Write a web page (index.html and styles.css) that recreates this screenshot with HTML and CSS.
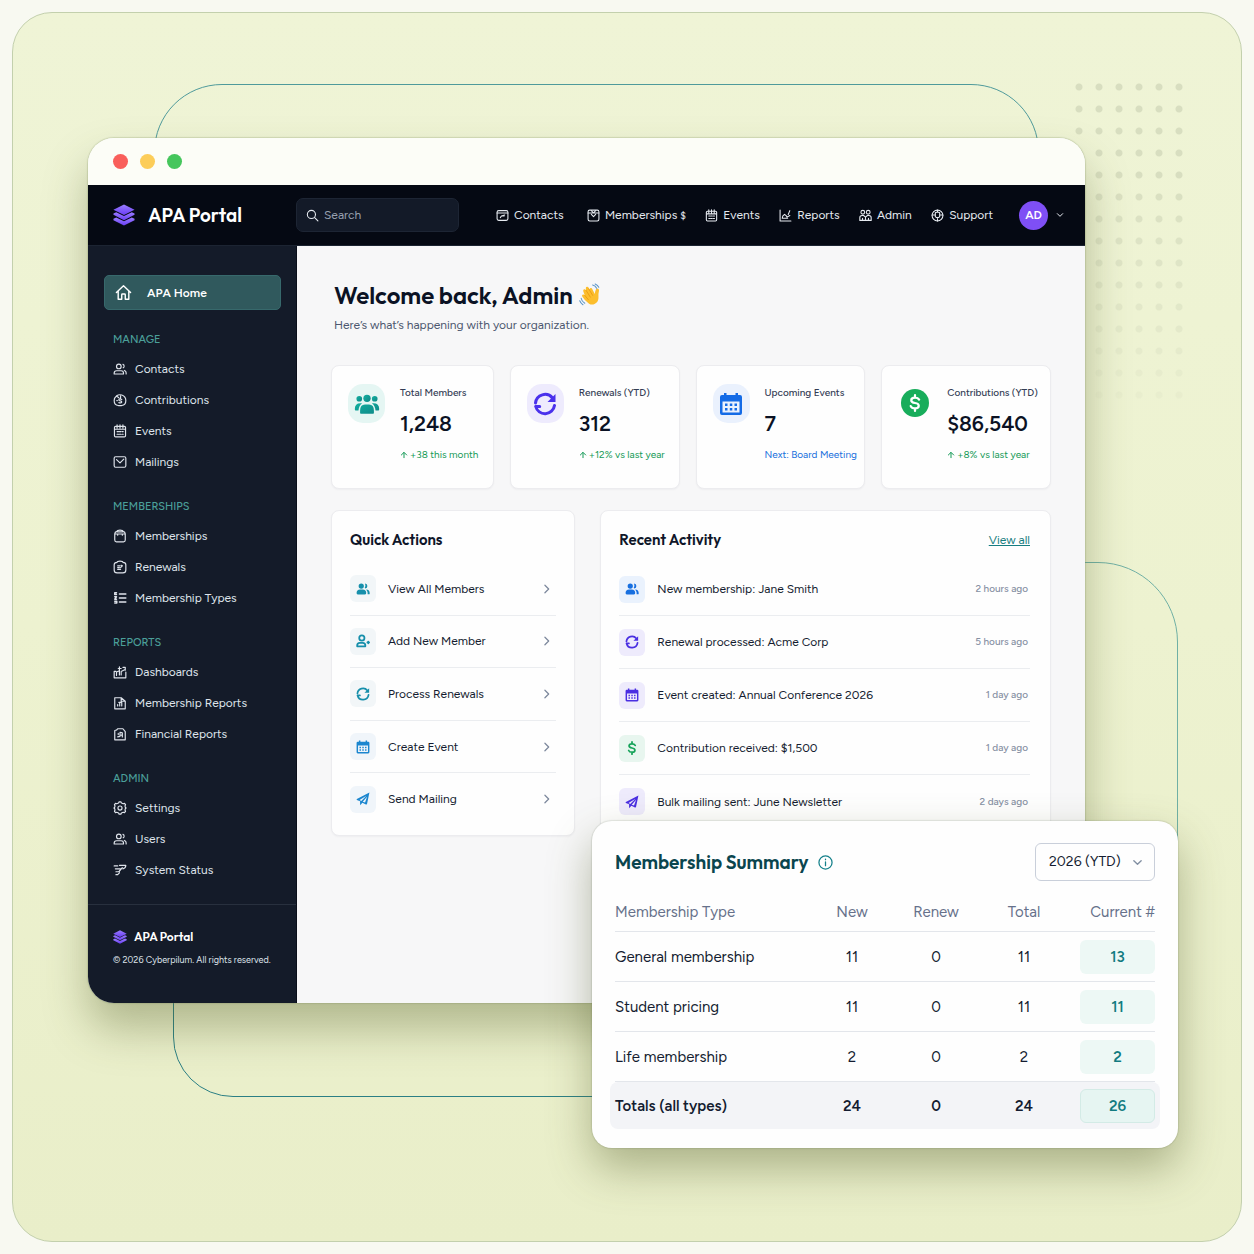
FILE: index.html
```html
<!DOCTYPE html>
<html lang="en">
<head>
    <meta charset="UTF-8">
    <meta name="viewport" content="width=device-width, initial-scale=1">
    <title>APA Portal</title>
    <link rel="stylesheet" href="styles.css">
</head>
<body>
<!-- icon set -->
<svg class="sprite" aria-hidden="true">
    <defs>
        <linearGradient id="violet" x1="0" y1="0" x2="0" y2="1"><stop offset="0" stop-color="#9a7dff"/><stop offset="1" stop-color="#6a3df5"/></linearGradient>
        <linearGradient id="teal" x1="0" y1="0" x2="1" y2="1"><stop offset="0" stop-color="#13b0a0"/><stop offset="1" stop-color="#0d8787"/></linearGradient>
    </defs>
    <symbol id="i-layers" viewBox="0 0 24 24"><g fill="url(#violet)"><path d="M12 .5 23.5 6.300 12 12 .5 6.300Z"/><path d="M.5 10.300 3.500 9 12 13.200 20.500 9l3 1.300v1.400L12 17.600.5 11.700Z"/><path d="M.5 16 3.500 14.700 12 18.900l8.500-4.200 3 1.300v1.600L12 23.500.5 17.600Z"/></g></symbol>
    <symbol id="i-search" viewBox="0 0 24 24"><circle cx="10" cy="10" r="7.500"/><path d="m16 16 6 6"/></symbol>
    <symbol id="i-home" viewBox="0 0 24 24"><path d="M2 12 12 2.500 22 12M4.500 10v11.500h5V15q0-1 1-1h3q1 0 1 1v6.500h5V10"/></symbol>
    <symbol id="i-people" viewBox="0 0 24 24"><circle cx="10" cy="7.500" r="4"/><path d="M2 20.500v-1.500q0-4 4-4h8q4 0 4 4v1.500ZM17 4q2.500 1 2 4-.5 1.500-1.500 2M19.500 14.500q3 1 3 4v2"/></symbol>
    <symbol id="i-coin" viewBox="0 0 24 24"><path d="M6 5Q2 8 2 13q0 8 7 8.500h6q7-.5 7-8.500 0-7-7-9.500-5-1.500-9 1.500l4 3M15 11q-4-2-5 .5 0 2 2.500 2t2.500 2q-1 2.500-5 1M13 5v4M6.500 13h1"/></symbol>
    <symbol id="i-cal" viewBox="0 0 24 24"><rect x="2.500" y="4" width="19" height="18" rx="2"/><path d="M3 9h18M7 1.500V7M12 1.500V7M17 1.500V7M7 13h2.500M11 13h2.500M15.500 13h2M7 17.500h2.500M11 17.500h2.500M15.500 17.500h2"/></symbol>
    <symbol id="i-mail" viewBox="0 0 24 24"><rect x="2" y="3" width="20" height="18" rx="2.500"/><path d="m6 8 6 5.500L18.500 7"/></symbol>
    <symbol id="i-case" viewBox="0 0 24 24"><path d="M3 8q0-3 4-4 0-2 5-2t5 2q4 1 4 4v11q0 3-3 3H6q-3 0-3-3ZM3 8.500h18M8 5h8M8 8.500v2M16 8.500v2"/></symbol>
    <symbol id="i-badge" viewBox="0 0 24 24"><path d="M7 4q0-2 5-2t5 2q5 0 5 4v9q0 5-5 5H7q-5 0-5-5V8q0-4 5-4ZM8 10h4M14 9l2 1-3 3M8 13h3M8 16h5"/></symbol>
    <symbol id="i-list" viewBox="0 0 24 24"><path d="M11 5h11M11 12h11M11 19h11M6 3H3v3h3M3 10h3l-3 4h3M3 17.500h3.500v3H3" stroke-width="2.500"/></symbol>
    <symbol id="i-dash" viewBox="0 0 24 24"><path d="M2 11v11h20V12M2 11h3M6 18v-6l5-2v7M11 3v9M9 6h5M14 17v-6l6-3M17 4h4v5"/></symbol>
    <symbol id="i-report" viewBox="0 0 24 24"><path d="M3 3h11l7 6v13H3ZM8 17v-2.500M11.500 17v-5M15 17v-6M14 3v6h7M10 11h5"/></symbol>
    <symbol id="i-finance" viewBox="0 0 24 24"><path d="M3 6q4 0 5-3h9l4 5v14H3ZM8 17l4-1V9l4 1v7M9 11v2M14 14h2"/></symbol>
    <symbol id="i-gear" viewBox="0 0 24 24"><path d="m9.500 3.500 1-2h3l1 2 3 1.200 2.200-.7 1.800 2.300-1 2.200.7 2.500 1.300 1-1.300 1-.7 2.500 1 2.200-1.800 2.300-2.200-.7-3 1.200-1 2h-3l-1-2-3-1.200-2.200.7-1.800-2.300 1-2.200L2.800 13l-1.300-1 1.300-1 .7-2.500-1-2.200L4.300 4l2.200.7Z"/><circle cx="12" cy="12" r="3.500"/></symbol>
    <symbol id="i-status" viewBox="0 0 24 24"><path d="M2 5h6M11 4h11q0 5-5 6M4 10h9M16 8l-6 7M5 15h6M5 20h3l3-3"/></symbol>
    <symbol id="i-box" viewBox="0 0 24 24"><rect x="2" y="3" width="20" height="18" rx="3"/><path d="M2 7.500h20M8 16l2-3 6-2M10 13h5"/></symbol>
    <symbol id="i-ticket" viewBox="0 0 24 24"><rect x="2" y="2" width="20" height="20" rx="3"/><path d="M2 7.500h20M8 3l4 4 4-4M8 10l4 4 4-4"/></symbol>
    <symbol id="i-chart" viewBox="0 0 24 24"><path d="M2 2v20h20M6 17q0-5 4-7l3 2 2 3 5-3M20 3l-3 7M7 17h9"/></symbol>
    <symbol id="i-admin" viewBox="0 0 24 24"><circle cx="7" cy="6" r="3.500"/><circle cx="17" cy="6" r="3.500"/><path d="M1.500 21v-5q0-4 4-4h3l3.500 3 3.500-3h3q4 0 4 4v5h-5v-4M6.500 17v4M12 15v6M2 21h9M13 21h5"/></symbol>
    <symbol id="i-support" viewBox="0 0 24 24"><circle cx="12" cy="12" r="10"/><path d="M2 11h6M16 11h6M8 7v7q4 4 8 0V7q-4-3-8 0ZM12 2v4M12 18v4"/></symbol>
    <symbol id="i-down" viewBox="0 0 24 24"><path d="m4 8 8 8 8-8"/></symbol>
    <symbol id="i-right" viewBox="0 0 24 24"><path d="m7 3 9 9-9 9"/></symbol>
    <symbol id="i-up" viewBox="0 0 24 24"><path d="M12 20V5M4 12l8-8 8 8"/></symbol>
    <symbol id="i-info" viewBox="0 0 24 24"><circle cx="12" cy="12" r="10.500"/><path d="M12 11v6M12 6.500v1"/></symbol>
    <symbol id="i-group" viewBox="0 0 32 28"><circle cx="16" cy="7" r="4.500"/><circle cx="6.500" cy="7.500" r="3.500"/><circle cx="25.500" cy="7.500" r="3.500"/><path d="M7.500 25v-3q0-7.500 6-7.500h5q6 0 6 7.500v3q0 1-1 1h-15q-1 0-1-1ZM1 20q0-7 7-7h2q-4 3-4.500 9H2q-1 0-1-2ZM31 20q0-7-7-7h-2q4 3 4.500 9H30q1 0 1-2Z"/></symbol>
    <symbol id="i-users" viewBox="0 0 24 24"><circle cx="9" cy="7" r="4.500"/><path d="M15.500 2.500q4 .5 4 4.500t-3.500 4q-1-.5-1-1 2-3.500.5-7.500ZM1 19q0-6 6-6h4.500q6 0 6 6 0 2.500-2 2.500H3q-2 0-2-2.500ZM17.500 13q6 0 6 6.500 0 1.500-1.500 1.500h-2q0-5-2.500-8Z"/></symbol>
    <symbol id="i-adduser" viewBox="0 0 24 24"><circle cx="10" cy="7" r="4.500"/><path d="M2 21v-1.500q0-4.500 4.500-4.500h5q4.500 0 4.500 4.500V21ZM21 13v3M19.500 14.500h3"/></symbol>
    <symbol id="i-sync" viewBox="0 0 24 24"><path d="M2.500 11A9.600 9.600 0 0 1 19.500 6M21.500 13.500A9.600 9.600 0 0 1 2.700 14.500h4"/><path d="M22.500 2v8h-8Z" fill="currentColor" stroke="none"/></symbol>
    <symbol id="i-calfill" viewBox="0 0 24 24"><path fill-rule="evenodd" d="M5 1h2.500v2h9V1H19v2h2q2 0 2 2v16q0 2-2 2H3q-2 0-2-2V5q0-2 2-2h2ZM3.500 9.500v11h17v-11Z"/><path d="M6 11.500h2.500V14H6ZM10.800 11.500h2.500V14h-2.500ZM15.500 11.500H18V14h-2.500ZM6 16h2.500v2.500H6ZM10.800 16h2.500v2.500h-2.500ZM15.500 16H18v2.500h-2.500Z"/></symbol>
    <symbol id="i-dollar" viewBox="0 0 24 24"><path d="M17.500 7.500Q16 4.800 12 4.800 7 4.800 7 8.300q0 3 5 3.700t5 3.700q0 3.500-5 3.500-4.500 0-5.700-3M12 1.500v3M12 19.500v3"/></symbol>
    <symbol id="i-plane" viewBox="0 0 24 24"><path fill-rule="evenodd" d="M23 1 1.500 12q-1 1 0 1.500L7 16v6.500l4-4 6 3q1.500 0 2-1.500ZM18 6.500 9 15.500l-3-2ZM19 8 15.500 18l-4-1.500Z"/></symbol>
    <symbol id="i-wave" viewBox="0 0 32 32">
        <path d="M14 28Q8 24 4.500 18q-1-2 .8-2.700 1.600-.5 2.800 1.300L6 11q-.7-2.300 1-3 1.800-.7 3 1.600L9.500 7q-.3-2.200 1.500-2.500 1.800-.2 2.700 2L15 8.500q-.3-2 1.300-2.300 1.600-.2 2.300 1.700l3.400 6.600q.4-4 1.500-6.200 1.200-1.900 3.200-1 1.800 1 1 3.500-1 3.500-.6 8.200.5 6.500-5.500 9.500-4 1.800-7.600-.5Z" fill="#fcbe2d"/>
        <path d="m8 16.500 5 6M9.800 9.500l6 9.500M13.500 7.500l5.500 9" fill="none" stroke="#e99a12" stroke-width="1.200" stroke-linecap="round"/>
        <path d="M3 20.500q.8 4.500 5 7M1 24q1.500 3.500 4.500 5.500M19 2q4 1 5.500 4.500M22.500.8q3.500 1.500 5 4.500" fill="none" stroke="#5c95c8" stroke-width="1.500" stroke-linecap="round"/>
    </symbol>
</svg>

<div class="stage">
    <div class="outline outline-top"></div>
    <div class="outline outline-right"></div>
    <div class="outline outline-bottom"></div>
    <div class="dots"></div>

    <div class="scene">
        <div class="window">
            <div class="titlebar">
                <span class="light red"></span>
                <span class="light yellow"></span>
                <span class="light green"></span>
            </div>

            <header class="topbar">
                <a class="brand" href="#"><svg><use href="#i-layers"/></svg>APA Portal</a>
                <label class="search">
                    <svg class="line"><use href="#i-search"/></svg>
                    <input type="search" placeholder="Search" aria-label="Search">
                </label>
                <nav class="topnav">
                    <a href="#"><svg class="line"><use href="#i-box"/></svg>Contacts</a>
                    <a href="#"><svg class="line"><use href="#i-ticket"/></svg><span>Memberships <small>$</small></span></a>
                    <a href="#"><svg class="line"><use href="#i-cal"/></svg>Events</a>
                    <a href="#"><svg class="line"><use href="#i-chart"/></svg>Reports</a>
                    <a href="#"><svg class="line"><use href="#i-admin"/></svg>Admin</a>
                    <a href="#"><svg class="line"><use href="#i-support"/></svg>Support</a>
                </nav>
                <button class="account" type="button"><span class="avatar">AD</span><svg class="line"><use href="#i-down"/></svg></button>
            </header>

            <div class="body">
                <aside class="sidebar">
                    <nav class="menu">
                        <a class="home" href="#"><svg class="line"><use href="#i-home"/></svg>APA Home</a>
                        <section>
                            <h2>MANAGE</h2>
                            <a href="#"><svg class="line"><use href="#i-people"/></svg>Contacts</a>
                            <a href="#"><svg class="line"><use href="#i-coin"/></svg>Contributions</a>
                            <a href="#"><svg class="line"><use href="#i-cal"/></svg>Events</a>
                            <a href="#"><svg class="line"><use href="#i-mail"/></svg>Mailings</a>
                        </section>
                        <section>
                            <h2>MEMBERSHIPS</h2>
                            <a href="#"><svg class="line"><use href="#i-case"/></svg>Memberships</a>
                            <a href="#"><svg class="line"><use href="#i-badge"/></svg>Renewals</a>
                            <a href="#"><svg class="line"><use href="#i-list"/></svg>Membership Types</a>
                        </section>
                        <section>
                            <h2>REPORTS</h2>
                            <a href="#"><svg class="line"><use href="#i-dash"/></svg>Dashboards</a>
                            <a href="#"><svg class="line"><use href="#i-report"/></svg>Membership Reports</a>
                            <a href="#"><svg class="line"><use href="#i-finance"/></svg>Financial Reports</a>
                        </section>
                        <section>
                            <h2>ADMIN</h2>
                            <a href="#"><svg class="line"><use href="#i-gear"/></svg>Settings</a>
                            <a href="#"><svg class="line"><use href="#i-people"/></svg>Users</a>
                            <a href="#"><svg class="line"><use href="#i-status"/></svg>System Status</a>
                        </section>
                    </nav>
                    <footer class="side-foot">
                        <div class="foot-brand"><svg><use href="#i-layers"/></svg>APA Portal</div>
                        <p>© 2026 Cyberpilum. All rights reserved.</p>
                    </footer>
                </aside>

                <main class="main">
                    <div class="welcome">
                        <h1>Welcome back, Admin <svg role="img" aria-label="waving hand"><use href="#i-wave"/></svg></h1>
                        <p>Here’s what’s happening with your organization.</p>
                    </div>

                    <div class="stats">
                        <div class="stat">
                            <span class="stat-icon teal"><svg class="fill"><use href="#i-group"/></svg></span>
                            <div class="stat-text">
                                <h3>Total Members</h3>
                                <strong>1,248</strong>
                                <p class="up"><svg class="line"><use href="#i-up"/></svg>+38 this month</p>
                            </div>
                        </div>
                        <div class="stat">
                            <span class="stat-icon purple"><svg class="line"><use href="#i-sync"/></svg></span>
                            <div class="stat-text">
                                <h3>Renewals (YTD)</h3>
                                <strong>312</strong>
                                <p class="up"><svg class="line"><use href="#i-up"/></svg>+12% vs last year</p>
                            </div>
                        </div>
                        <div class="stat">
                            <span class="stat-icon blue"><svg class="fill"><use href="#i-calfill"/></svg></span>
                            <div class="stat-text">
                                <h3>Upcoming Events</h3>
                                <strong>7</strong>
                                <p class="next">Next: Board Meeting</p>
                            </div>
                        </div>
                        <div class="stat">
                            <span class="stat-icon money"><svg class="line"><use href="#i-dollar"/></svg></span>
                            <div class="stat-text">
                                <h3>Contributions (YTD)</h3>
                                <strong>$86,540</strong>
                                <p class="up"><svg class="line"><use href="#i-up"/></svg>+8% vs last year</p>
                            </div>
                        </div>
                    </div>

                    <div class="panels">
                        <section class="panel quick">
                            <div class="panel-head"><h2>Quick Actions</h2></div>
                            <ul>
                                <li><a href="#"><span class="tile cyan"><svg class="fill"><use href="#i-users"/></svg></span>View All Members<svg class="line go"><use href="#i-right"/></svg></a></li>
                                <li><a href="#"><span class="tile cyan"><svg class="line"><use href="#i-adduser"/></svg></span>Add New Member<svg class="line go"><use href="#i-right"/></svg></a></li>
                                <li><a href="#"><span class="tile cyan"><svg class="line"><use href="#i-sync"/></svg></span>Process Renewals<svg class="line go"><use href="#i-right"/></svg></a></li>
                                <li><a href="#"><span class="tile sky"><svg class="fill"><use href="#i-calfill"/></svg></span>Create Event<svg class="line go"><use href="#i-right"/></svg></a></li>
                                <li><a href="#"><span class="tile sky"><svg class="fill"><use href="#i-plane"/></svg></span>Send Mailing<svg class="line go"><use href="#i-right"/></svg></a></li>
                            </ul>
                        </section>
                        <section class="panel recent">
                            <div class="panel-head"><h2>Recent Activity</h2><a href="#">View all</a></div>
                            <ul>
                                <li><span class="tile blue"><svg class="fill"><use href="#i-users"/></svg></span>New membership: Jane Smith<time>2 hours ago</time></li>
                                <li><span class="tile purple"><svg class="line"><use href="#i-sync"/></svg></span>Renewal processed: Acme Corp<time>5 hours ago</time></li>
                                <li><span class="tile purple"><svg class="fill"><use href="#i-calfill"/></svg></span>Event created: Annual Conference 2026<time>1 day ago</time></li>
                                <li><span class="tile green"><svg class="line"><use href="#i-dollar"/></svg></span>Contribution received: $1,500<time>1 day ago</time></li>
                                <li><span class="tile purple"><svg class="fill"><use href="#i-plane"/></svg></span>Bulk mailing sent: June Newsletter<time>2 days ago</time></li>
                            </ul>
                        </section>
                    </div>
                </main>
            </div>
        </div>

        <section class="summary">
            <div class="summary-head">
                <h2>Membership Summary</h2>
                <button class="info" type="button" aria-label="About this summary"><svg class="line"><use href="#i-info"/></svg></button>
                <div class="period">
                    <select aria-label="Period">
                        <option>2026 (YTD)</option>
                        <option>2025</option>
                    </select>
                    <svg class="line"><use href="#i-down"/></svg>
                </div>
            </div>
            <table>
                <thead>
                    <tr><th class="type">Membership Type</th><th>New</th><th>Renew</th><th class="total">Total</th><th class="current">Current #</th></tr>
                </thead>
                <tbody>
                    <tr><td>General membership</td><td>11</td><td>0</td><td>11</td><td><span class="pill">13</span></td></tr>
                    <tr><td>Student pricing</td><td>11</td><td>0</td><td>11</td><td><span class="pill">11</span></td></tr>
                    <tr><td>Life membership</td><td>2</td><td>0</td><td>2</td><td><span class="pill">2</span></td></tr>
                </tbody>
                <tfoot>
                    <tr><td>Totals (all types)</td><td>24</td><td>0</td><td>24</td><td><span class="pill">26</span></td></tr>
                </tfoot>
            </table>
        </section>
    </div>
</div>
</body>
</html>
```
FILE: styles.css
```css
* {
    box-sizing: border-box;
    margin: 0;
    padding: 0;
}

body {
    padding: 12px;
    background: #f8f9f1;
    color: #141c30;
    font: 12px/18px Figtree, Lato, "Liberation Sans", sans-serif;
}

h1,
h2,
.brand,
.foot-brand {
    font-family: Outfit, Figtree, Lato, "Liberation Sans", sans-serif;
}

a {
    color: inherit;
    text-decoration: none;
}

ul {
    list-style: none;
}

button,
input,
select {
    border: 0;
    background: none;
    color: inherit;
    font: inherit;
}

svg {
    display: block;
    flex: none;
}

.sprite {
    position: absolute;
    width: 0;
    height: 0;
}

.line {
    fill: none;
    stroke: currentColor;
    stroke-width: 2;
    stroke-linecap: round;
    stroke-linejoin: round;
}

.fill {
    fill: currentColor;
}

/* backdrop */
.stage {
    position: relative;
    min-height: calc(100vh - 24px);
    padding: 125px 156px 237px 75px;
    border: 1px solid #c3d0ad;
    border-radius: 40px;
    background: linear-gradient(180deg, #eff4d6 0%, #edf2d0 50%, #e9eec9 100%);
    overflow: hidden;
}

.outline {
    position: absolute;
    border: 1px solid #4f9a9b;
}

.outline-top {
    top: 71px;
    left: 141px;
    right: 202px;
    height: 300px;
    border-radius: 68px;
}

.outline-right {
    top: 549px;
    right: 63px;
    width: 300px;
    height: 400px;
    border-color: #70b0a5;
    border-radius: 80px;
}

.outline-bottom {
    left: 160px;
    right: 300px;
    bottom: 144px;
    height: 300px;
    border-color: #2b7f84;
    border-radius: 60px;
}

.dots {
    position: absolute;
    top: 63px;
    right: 52px;
    width: 120px;
    height: 330px;
    background: radial-gradient(circle, #d8dec0 3px, transparent 4px) 0 0 / 20px 22px;
    -webkit-mask-image: linear-gradient(190deg, #000 30%, transparent 110%);
    mask-image: linear-gradient(190deg, #000 30%, transparent 110%);
}

.scene {
    position: relative;
}

/* browser window */
.window {
    border-radius: 26px;
    background: #f7f7f8;
    box-shadow: 0 0 1px 1px rgba(120, 140, 90, .25), 0 26px 44px rgba(84, 94, 42, .38);
    overflow: hidden;
}

.titlebar {
    display: flex;
    align-items: center;
    gap: 12px;
    height: 47px;
    padding: 0 25px;
    background: #fcfdf7;
}

.light {
    width: 15px;
    height: 15px;
    border-radius: 50%;
}

.red {
    background: #f95f5b;
}

.yellow {
    background: #fccd59;
}

.green {
    background: #45c65c;
}

.topbar {
    display: flex;
    align-items: center;
    height: 61px;
    padding: 0 21px 0 25px;
    border-bottom: 1px solid #1c2432;
    background: #050913;
    color: #e6eaf0;
}

.brand {
    display: flex;
    align-items: center;
    gap: 13px;
    width: 183px;
    color: #fff;
    font-size: 19px;
    font-weight: 600;
}

.brand svg {
    width: 22px;
    height: 24px;
}

.search {
    display: flex;
    align-items: center;
    gap: 5px;
    width: 163px;
    height: 34px;
    padding: 0 9px;
    border: 1px solid #1d2534;
    border-radius: 7px;
    background: #131a28;
}

.search svg {
    width: 13px;
    height: 13px;
}

.search input {
    width: 100%;
    outline: 0;
}

.search input::placeholder {
    color: #98a1b0;
}

.topnav {
    display: flex;
    flex: 1;
    justify-content: space-between;
    margin: 0 26px 0 37px;
}

.topnav a {
    display: flex;
    align-items: center;
    gap: 5px;
}

.topnav a:first-child {
    margin-right: 4px;
}

.topnav svg {
    width: 13px;
    height: 13px;
}

.topnav small {
    font-size: 10px;
}

.account {
    display: flex;
    align-items: center;
    gap: 8px;
}

.account svg {
    width: 8px;
    height: 8px;
    stroke-width: 3;
}

.avatar {
    width: 29px;
    height: 29px;
    border-radius: 50%;
    background: #7f4ff5;
    color: #fff;
    font-weight: 600;
    line-height: 29px;
    text-align: center;
}

.body {
    display: flex;
}

/* sidebar */
.sidebar {
    flex: none;
    width: 209px;
    border-right: 1px solid #0a0e1a;
    background: #141b29;
    color: #dfe4eb;
}

.menu {
    display: flex;
    flex-direction: column;
    gap: 13px;
    padding: 29px 15px 19px 16px;
}

.menu section {
    padding-left: 9px;
}

.menu h2 {
    padding-top: 3px;
    color: #4b9f99;
    font-family: inherit;
    font-size: 11px;
    font-weight: 500;
    line-height: 27px;
}

.menu a {
    display: flex;
    align-items: center;
    gap: 8px;
    height: 31px;
}

.menu a svg {
    width: 14px;
    height: 14px;
}

.menu .home {
    gap: 15px;
    height: 35px;
    padding-left: 10px;
    border: 1px solid #37696c;
    border-radius: 5px;
    background: #30595d;
    color: #fff;
    font-weight: 600;
}

.menu .home svg {
    width: 17px;
    height: 17px;
}

.side-foot {
    height: 99px;
    padding: 23px 25px;
    border-top: 1px solid #28303e;
}

.side-foot p {
    padding-top: 5px;
    font-size: 9px;
    white-space: nowrap;
}

.foot-brand {
    display: flex;
    align-items: center;
    gap: 7px;
    color: #fff;
    font-weight: 600;
}

.foot-brand svg {
    width: 14px;
    height: 16px;
}

/* main column */
.main {
    flex: 1;
    min-width: 0;
    padding: 35px 34px;
}

.welcome {
    height: 84px;
    padding-left: 3px;
}

.welcome h1 {
    display: flex;
    align-items: center;
    gap: 6px;
    color: #0b1224;
    font-size: 24px;
    font-weight: 600;
    line-height: 28px;
}

.welcome h1 svg {
    width: 23px;
    height: 24px;
}

.welcome p {
    padding-top: 7px;
    color: #4d576f;
}

.stats {
    display: grid;
    grid-template-columns: 163fr 170fr 170fr 170fr;
    gap: 16px;
}

.stat,
.panel {
    border: 1px solid #ececef;
    border-radius: 8px;
    background: #fefefe;
    box-shadow: 0 1px 2px rgba(20, 28, 48, .04);
}

.stat {
    display: flex;
    gap: 15px;
    min-height: 124px;
    padding: 18px 0 0 16px;
}

.stat-icon {
    display: flex;
    flex: none;
    align-items: center;
    justify-content: center;
    width: 37px;
    height: 39px;
    border-radius: 15px;
}

.stat-icon svg {
    width: 24px;
    height: 24px;
}

.stat-icon .line {
    stroke-width: 3;
}

.stat-icon.teal {
    background: #e5f6f3;
}

.stat-icon.teal svg {
    width: 26px;
    fill: url(#teal);
}

.stat-icon.purple {
    background: #eeebfd;
    color: #4a31ec;
}

.stat-icon.blue {
    background: #eaf1fd;
    color: #146be6;
}

.stat-icon.money {
    width: 28px;
    height: 28px;
    margin: 5px 3px;
    border-radius: 50%;
    background: #18ad5b;
    color: #fff;
}

.stat-icon.money svg {
    width: 18px;
    height: 18px;
}

.stat-text {
    white-space: nowrap;
}

.stat h3 {
    color: #333c54;
    font-size: 10px;
    font-weight: 500;
    line-height: 18px;
}

.stat strong {
    display: block;
    padding: 6px 0;
    color: #0b1224;
    font-size: 21px;
    font-weight: 600;
    line-height: 32px;
}

.stat p {
    display: flex;
    align-items: center;
    gap: 2px;
    font-size: 10px;
}

.stat p svg {
    width: 8px;
    height: 8px;
    stroke-width: 3;
}

.up {
    color: #159a57;
}

.next {
    color: #176fdc;
}

.panels {
    display: grid;
    grid-template-columns: 244fr 450fr;
    gap: 25px;
    margin-top: 21px;
}

.panel {
    display: flex;
    flex-direction: column;
    padding: 17px 18px 7px;
}

.quick {
    padding-bottom: 10px;
}

.recent {
    padding-right: 20px;
}

.panel-head {
    display: flex;
    align-items: center;
    justify-content: space-between;
    height: 35px;
    padding-bottom: 11px;
}

.panel-head h2 {
    color: #0f1629;
    font-size: 15px;
    font-weight: 600;
}

.panel-head a {
    color: #177d80;
    text-decoration: underline;
}

.panel ul {
    display: flex;
    flex: 1;
    flex-direction: column;
}

.panel li {
    flex: 1;
    border-bottom: 1px solid #ebedf0;
}

.panel li:last-child {
    border-bottom: 0;
}

.quick a,
.recent li {
    display: flex;
    align-items: center;
    gap: 12px;
}

.quick a {
    height: 100%;
    padding-right: 4px;
}

.recent li {
    min-height: 53px;
}

.tile {
    display: flex;
    flex: none;
    align-items: center;
    justify-content: center;
    width: 26px;
    height: 27px;
    border-radius: 6px;
}

.tile svg {
    width: 14px;
    height: 14px;
}

.tile .line {
    stroke-width: 3;
}

.tile.cyan {
    background: #f2f6f8;
    color: #168fab;
}

.tile.sky {
    background: #f0f5fa;
    color: #1b86cf;
}

.tile.blue {
    background: #eaf2fd;
    color: #176fe0;
}

.tile.purple {
    background: #eeebfc;
    color: #4a2fe2;
}

.tile.green {
    background: #e8f6ef;
    color: #17a35a;
}

.go {
    width: 10px;
    height: 10px;
    margin-left: auto;
    color: #7d889c;
    stroke-width: 3;
}

.panel time {
    margin-left: auto;
    padding-right: 2px;
    color: #8690a3;
    font-size: 10px;
    font-weight: 500;
}

/* floating summary card */
.summary {
    position: absolute;
    right: -93px;
    bottom: -145px;
    width: 586px;
    padding: 22px 23px 19px;
    border-radius: 20px;
    background: #fefefe;
    box-shadow: 0 0 1px 1px rgba(60, 70, 50, .12), 0 20px 44px rgba(84, 94, 42, .42);
    font-size: 15px;
}

.summary-head {
    display: flex;
    align-items: center;
    gap: 9px;
}

.summary h2 {
    color: #0a454e;
    font-size: 19px;
    font-weight: 600;
}

.info {
    color: #14808a;
}

.info svg {
    width: 15px;
    height: 15px;
}

.period {
    position: relative;
    margin-left: auto;
}

.period select {
    width: 120px;
    height: 38px;
    padding: 0 13px;
    border: 1px solid #c9cfda;
    border-radius: 6px;
    appearance: none;
    font-size: 14px;
}

.period svg {
    position: absolute;
    top: 14px;
    right: 12px;
    width: 11px;
    height: 11px;
    color: #8390a3;
    stroke-width: 3;
    pointer-events: none;
}

.summary table {
    width: 100%;
    margin-top: 12px;
    border-spacing: 0;
    table-layout: fixed;
}

.summary th {
    width: 84px;
    height: 39px;
    border-bottom: 1px solid #e3e6eb;
    color: #66718a;
    font-weight: 400;
}

.summary .type {
    width: auto;
    text-align: left;
}

.summary .total {
    width: 92px;
}

.summary .current {
    width: 85px;
    text-align: right;
}

.summary td {
    height: 50px;
    border-bottom: 1px solid #e3e6eb;
    text-align: center;
}

.summary td:first-child {
    text-align: left;
}

.pill {
    display: block;
    width: 75px;
    height: 34px;
    margin-left: auto;
    border-radius: 6px;
    background: #edf8f5;
    color: #127b80;
    font-weight: 600;
    line-height: 34px;
}

.summary tfoot td {
    height: 47px;
    border: 0;
    background: #f3f4f7;
    font-weight: 600;
}

.summary tfoot td:first-child {
    border-radius: 8px 0 0 8px;
    box-shadow: -5px 0 0 #f3f4f7;
}

.summary tfoot td:last-child {
    border-radius: 0 8px 8px 0;
    box-shadow: 5px 0 0 #f3f4f7;
}

.summary tfoot .pill {
    border: 1px solid #d3ebe6;
    background: #e6f5f2;
    line-height: 32px;
}
```
